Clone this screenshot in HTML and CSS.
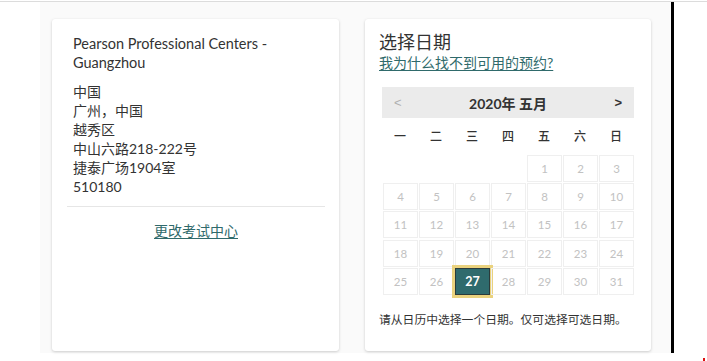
FILE: index.html
```html
<!DOCTYPE html>
<html lang="zh">
<head>
<meta charset="utf-8">
<link rel="stylesheet" href="styles.css">
</head>
<body>
<div class="page">
  <div class="stage">
    <section class="card left">
      <div class="center-info">
        <div class="center-name">Pearson Professional Centers - Guangzhou</div>
        <div class="address">
          <div>中国</div>
          <div>广州，中国</div>
          <div>越秀区</div>
          <div>中山六路218-222号</div>
          <div>捷泰广场1904室</div>
          <div>510180</div>
        </div>
      </div>
      <hr class="divider">
      <div class="change"><a href="#">更改考试中心</a></div>
    </section>
    <section class="card right">
      <h2 class="title">选择日期</h2>
      <a class="why" href="#">我为什么找不到可用的预约?</a>
      <div class="calendar">
        <div class="cal-head">
          <span class="nav prev">&lt;</span>
          <span class="month">2020年 五月</span>
          <span class="nav next">&gt;</span>
        </div>
        <div class="weekdays">
          <span>一</span><span>二</span><span>三</span><span>四</span><span>五</span><span>六</span><span>日</span>
        </div>
        <div class="days">
          <span class="empty"></span><span class="empty"></span><span class="empty"></span><span class="empty"></span>
          <span class="day">1</span><span class="day">2</span><span class="day">3</span>
          <span class="day">4</span><span class="day">5</span><span class="day">6</span><span class="day">7</span><span class="day">8</span><span class="day">9</span><span class="day">10</span>
          <span class="day">11</span><span class="day">12</span><span class="day">13</span><span class="day">14</span><span class="day">15</span><span class="day">16</span><span class="day">17</span>
          <span class="day">18</span><span class="day">19</span><span class="day">20</span><span class="day">21</span><span class="day">22</span><span class="day">23</span><span class="day">24</span>
          <span class="day">25</span><span class="day">26</span><span class="day selected">27</span><span class="day">28</span><span class="day">29</span><span class="day">30</span><span class="day">31</span>
        </div>
      </div>
      <p class="hint">请从日历中选择一个日期。仅可选择可选日期。</p>
    </section>
  </div>
  <span class="mark"></span>
</div>
</body>
</html>
```

FILE: styles.css
```css
* { box-sizing: border-box; }
html, body { margin: 0; padding: 0; }
body {
  background: #ffffff;
  font-family: Lato, "Noto Sans CJK SC", sans-serif;
  color: #333;
  width: 707px;
  height: 361px;
  overflow: hidden;
}
.page {
  position: relative;
  height: 361px;
  border-top: 1px solid #dcdcdc;
  margin-top: 1px;
}
.stage {
  margin-left: 40px;
  width: 634px;
  height: 351px;
  background: #fafafa;
  border-right: 3px solid #000;
  display: flex;
  gap: 26px;
  padding: 17px 0 0 12px;
}
.card {
  background: #fff;
  height: 332px;
  border-radius: 3px;
  box-shadow: 0 1px 3px rgba(0,0,0,0.18), 0 0 1px rgba(0,0,0,0.06);
}
.card.left {
  width: 287px;
  padding: 15px 14px 0 15px;
}
.center-info { padding-left: 6px; }
.center-name {
  font-size: 14.5px;
  line-height: 19px;
  width: 230px;
  color: #333;
}
.address {
  margin-top: 10px;
  font-size: 14px;
  line-height: 19px;
  color: #333;
}
.divider {
  margin: 10px 0 0;
  border: 0;
  border-top: 1px solid #e6e6e6;
}
.change {
  text-align: center;
  margin-top: 14px;
  font-size: 14px;
  line-height: 19px;
}
.change a, .why {
  color: #2f6a6b;
  text-decoration: underline;
  text-underline-offset: 2px;
}
.card.right {
  width: 286px;
  padding: 12px 17px 0 14px;
}
.title {
  margin: 0;
  font-size: 18px;
  font-weight: normal;
  line-height: 23px;
  color: #333;
}
.why {
  display: block;
  font-size: 14px;
  line-height: 18px;
  margin-top: 0;
}
.calendar {
  margin: 15px 0 0 3px;
  width: 252px;
}
.cal-head {
  height: 31px;
  background: #ebebeb;
  display: flex;
  align-items: center;
  justify-content: space-between;
  padding: 0 12px 0 12px;
}
.nav { font-size: 13px; font-family: "Liberation Sans", sans-serif; }
.prev { color: #b0b0b0; }
.next { color: #333; font-weight: bold; }
.month {
  font-size: 14px;
  font-weight: bold;
  color: #333;
}
.weekdays {
  display: grid;
  grid-template-columns: repeat(7, 36px);
  height: 34px;
  align-items: center;
  font-size: 12px;
  font-weight: 500;
  color: #333;
}
.weekdays span { text-align: center; }
.days {
  display: grid;
  grid-template-columns: repeat(7, 35px);
  grid-auto-rows: 27px;
  column-gap: 1px;
  row-gap: 1.2px;
  padding-left: 1px;
  margin-top: 3px;
}
.day {
  border: 1px solid #efefef;
  display: flex;
  align-items: center;
  justify-content: center;
  font-size: 11.5px;
  color: #c2c2c2;
}
.day.selected {
  background: #2f6b6d;
  color: #fff;
  font-weight: bold;
  font-size: 12.5px;
  border: 1px solid #2a3b3b;
  outline: 3px solid #ead27e;
  outline-offset: 0;
}
.hint {
  margin: 17px 0 0;
  font-size: 11.8px;
  line-height: 16px;
  color: #333;
  white-space: nowrap;
}
.mark {
  position: absolute;
  right: 2px;
  top: 356px;
  width: 2px;
  height: 3px;
  background: #d11;
}
```
